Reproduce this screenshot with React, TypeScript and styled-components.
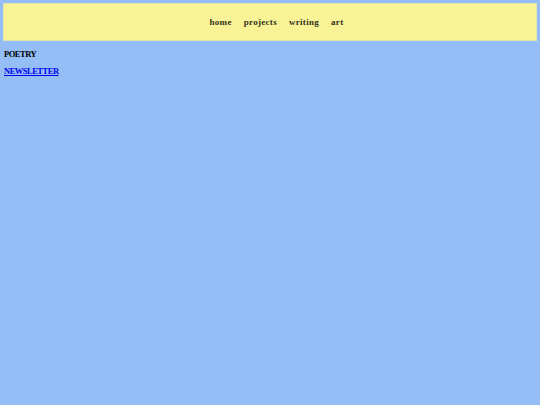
import styled, {createGlobalStyle} from "styled-components";

const GlobalStyle = createGlobalStyle`
  html, body {
    margin: 0;
    padding: 0;
    background-color: #95bef6;
    min-height: 100%;
  }
  body {
    padding: 3px;
    font-family: "Liberation Serif", "Times New Roman", serif;
  }
`

const navItems = ["home", "projects", "writing", "art"]

export default function App() {
    return (
        <>
            <GlobalStyle/>
            <StyledHeader>
                <StyledNav>
                    {navItems.map(item => (
                        <NavLink key={item} href="#">{item}</NavLink>
                    ))}
                </StyledNav>
            </StyledHeader>

            <StyledMain>
                <SectionTitle>POETRY</SectionTitle>
                <SectionLink href="#">NEWSLETTER</SectionLink>
            </StyledMain>
        </>
    );
}

const StyledHeader = styled.header`
  background-color: #f8f397;
  border: 1px solid #dfe6b4;
  height: 36px;
  display: flex;
  align-items: center;
  justify-content: center;
`

const StyledNav = styled.nav`
  display: flex;
  gap: 12px;
  padding-left: 13px;
`

const NavLink = styled.a`
  font-size: 9px;
  font-weight: 700;
  letter-spacing: 0.3px;
  color: #33321a;
  text-decoration: none;
  line-height: 10px;
`

const StyledMain = styled.main`
  display: flex;
  flex-direction: column;
  align-items: flex-start;
  padding: 8px 1px;
  gap: 7px;
`

const SectionTitle = styled.h2`
  margin: 0;
  font-size: 8.5px;
  font-weight: 700;
  letter-spacing: -0.5px;
  line-height: 10px;
  color: #000;
`

const SectionLink = styled.a`
  font-size: 8.5px;
  font-weight: 700;
  letter-spacing: -0.5px;
  line-height: 10px;
  color: #0000ee;
  text-decoration: underline;
`
